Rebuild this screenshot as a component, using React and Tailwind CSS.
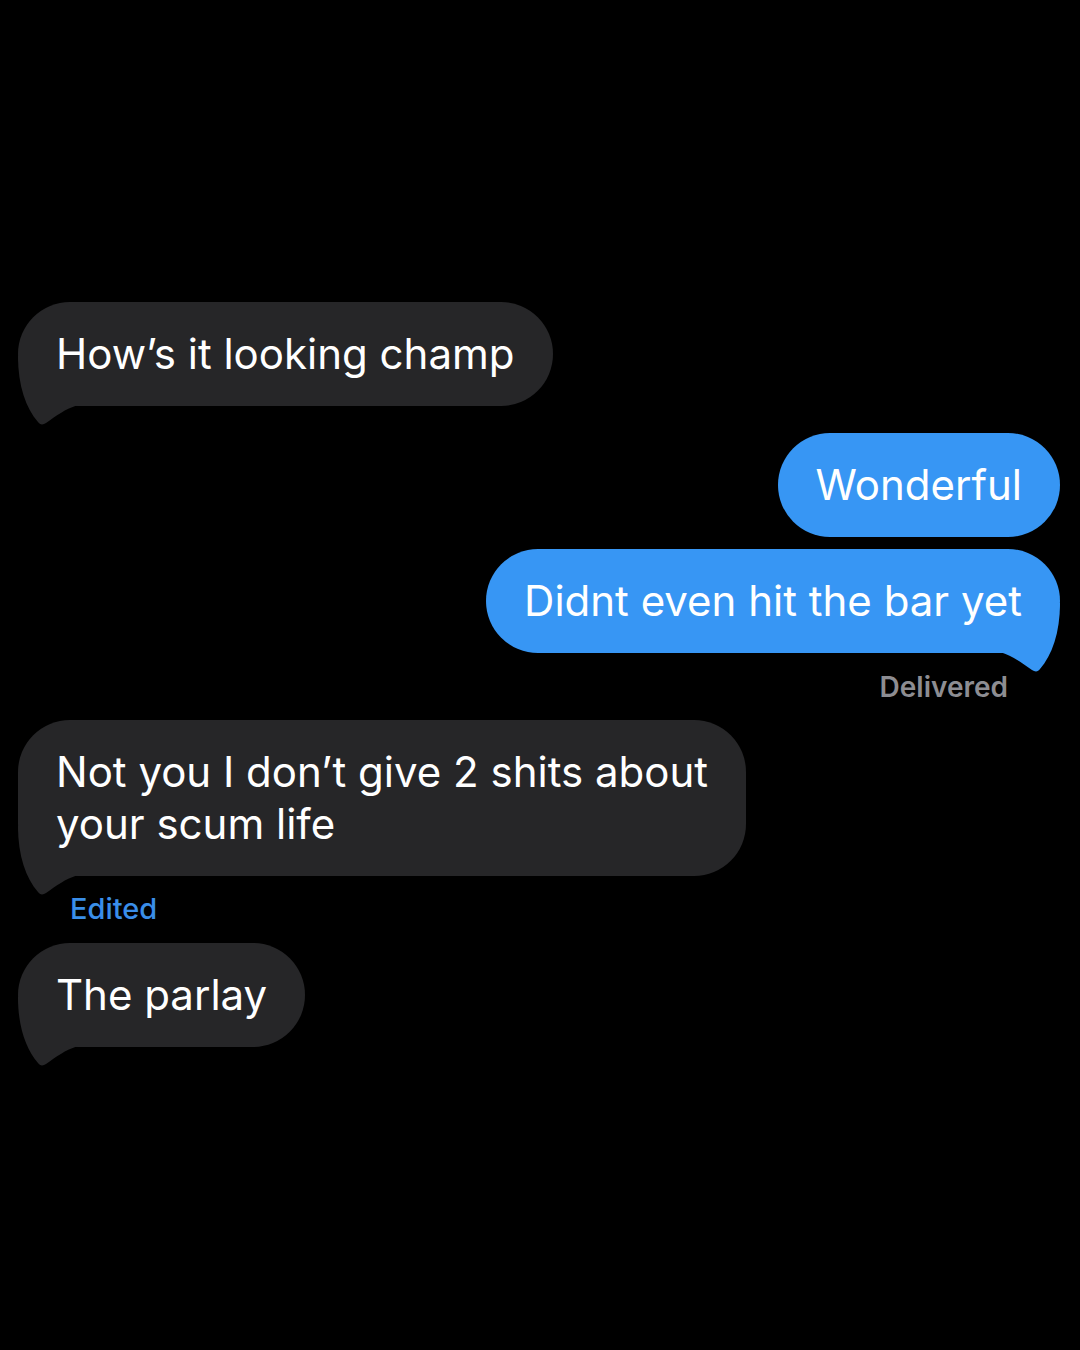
import React from "react";

function Tail({ sent, color }) {
  return (
    <svg
      width="60"
      height="70"
      viewBox="0 0 60 70"
      className={
        sent
          ? "absolute right-0 -bottom-[20px] -scale-x-100"
          : "absolute left-0 -bottom-[20px]"
      }
    >
      <path
        d="M0 0 C 0 30, 8 52, 20 66 C 22 69, 25 69, 28 67 C 38 60, 47 53, 60 49 L 60 0 Z"
        fill={color}
      />
    </svg>
  );
}

function Bubble({ sent, tail, children }) {
  const color = sent ? "#3796f4" : "#262628";
  return (
    <div className={sent ? "flex justify-end pr-[20px]" : "flex justify-start pl-[18px]"}>
      <div
        className={
          "relative w-fit rounded-[52px] px-[38px] py-[26px] text-[42px] leading-[52px] text-white " +
          (sent ? "bg-[#3796f4]" : "bg-[#262628]")
        }
      >
        {tail && <Tail sent={sent} color={color} />}
        <span className="relative">{children}</span>
      </div>
    </div>
  );
}

export default function App() {
  return (
    <div
      className="min-h-[1350px] w-[1080px] bg-black pt-[302px] flex flex-col"
      style={{ fontFamily: "Inter, 'Liberation Sans', sans-serif" }}
    >
      <Bubble tail>How’s it looking champ</Bubble>

      <div className="mt-[27px]">
        <Bubble sent>Wonderful</Bubble>
      </div>
      <div className="mt-[12px]">
        <Bubble sent tail>Didnt even hit the bar yet</Bubble>
      </div>
      <div className="flex justify-end pr-[72px] mt-[18px]">
        <span className="text-[28px] font-semibold leading-[32px] text-[#8d8d92]">
          Delivered
        </span>
      </div>

      <div className="mt-[17px]">
        <Bubble tail>
          Not you I don’t give 2 shits about
          <br />
          your scum life
        </Bubble>
      </div>
      <div className="pl-[70px] mt-[17px]">
        <span className="text-[29px] font-medium leading-[32px] text-[#3a8ee9]">
          Edited
        </span>
      </div>

      <div className="mt-[18px]">
        <Bubble tail>The parlay</Bubble>
      </div>
    </div>
  );
}
